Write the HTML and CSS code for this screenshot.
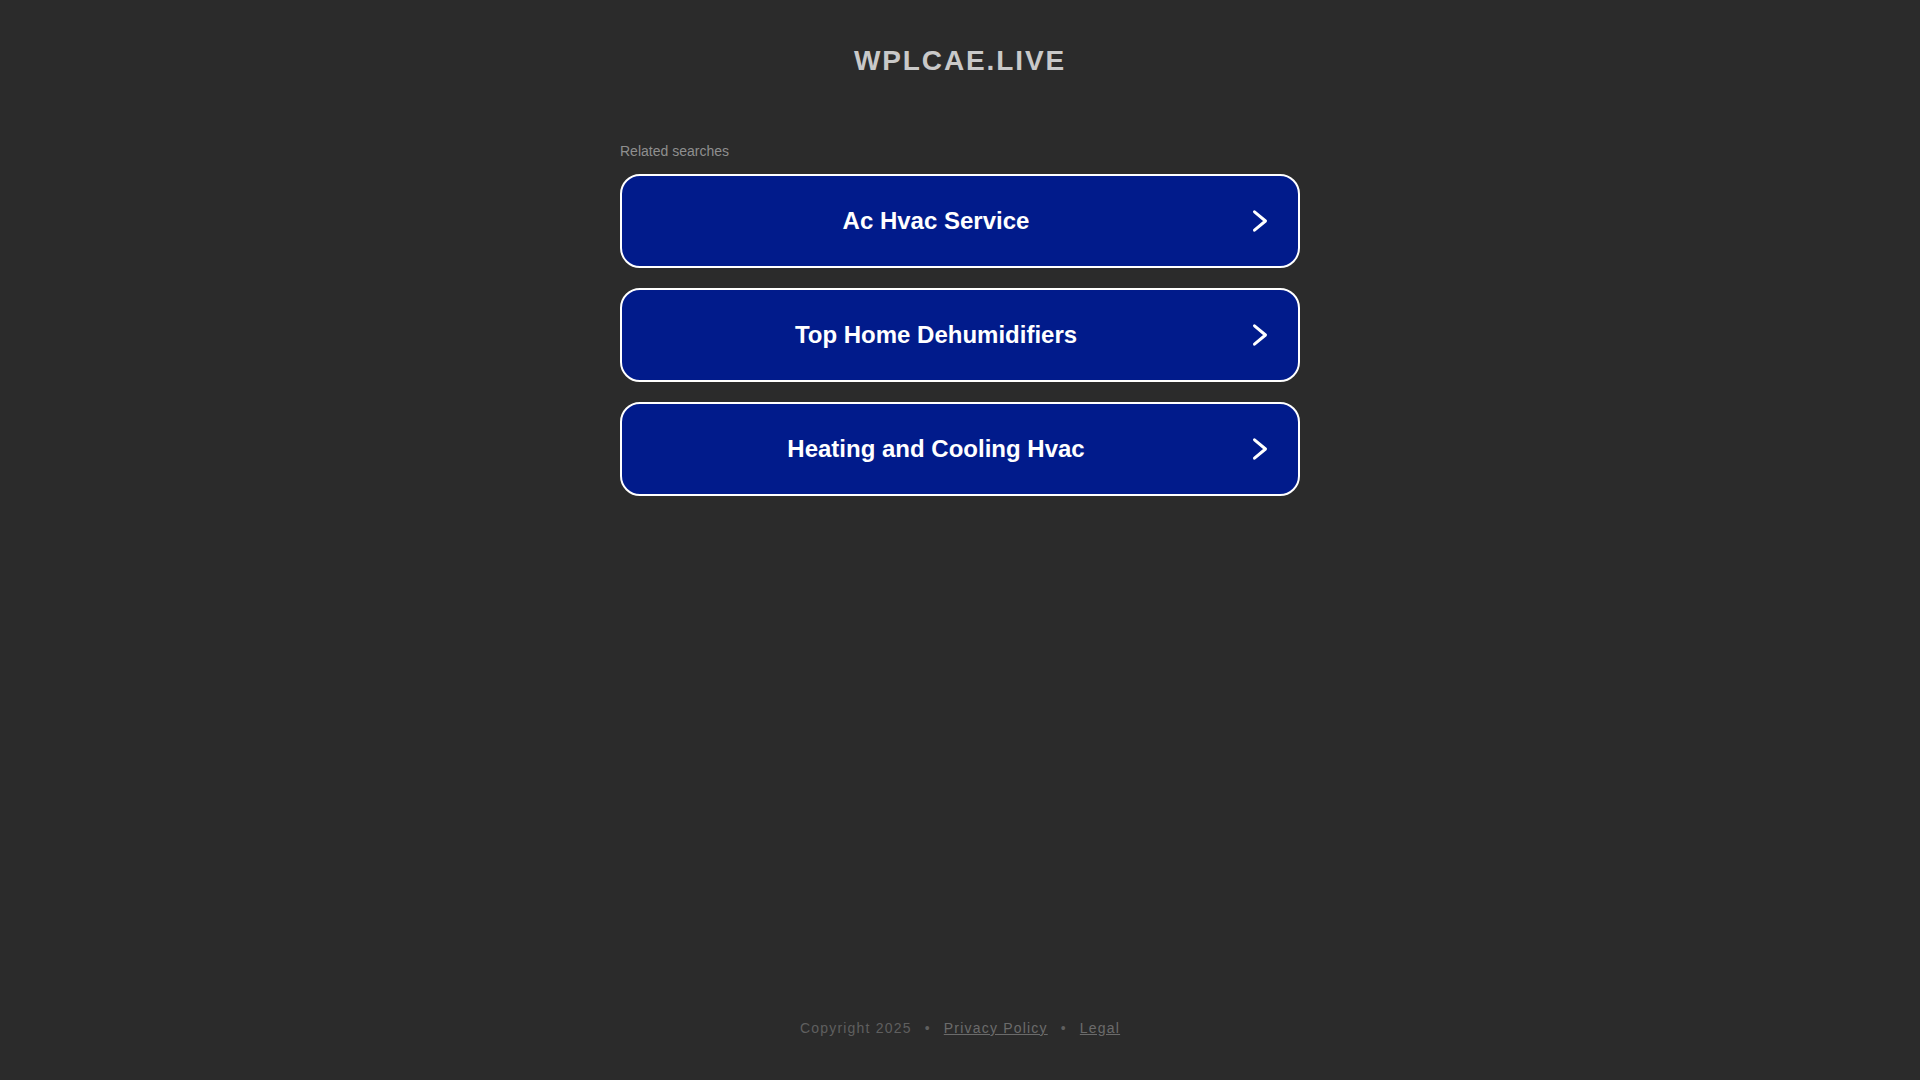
FILE: index.html
```
<!DOCTYPE html>
<html lang="en">
<head>
<meta charset="utf-8">
<title>wplcae.live</title>
<link rel="stylesheet" href="styles.css">
</head>
<body>
<div class="page">
  <header class="header">
    <h1 class="domain">WPLCAE.LIVE</h1>
  </header>
  <main class="content">
    <p class="related">Related searches</p>
    <div class="links">
      <a class="link" href="#">
        <span class="link-text">Ac Hvac Service</span>
        <svg class="chev" width="16" height="24" viewBox="0 0 16 24"><path d="M2.5 2.8 L13.5 12 L2.5 21.2" fill="none" stroke="#fff" stroke-width="3" stroke-linecap="round" stroke-linejoin="round"/></svg>
      </a>
      <a class="link" href="#">
        <span class="link-text">Top Home Dehumidifiers</span>
        <svg class="chev" width="16" height="24" viewBox="0 0 16 24"><path d="M2.5 2.8 L13.5 12 L2.5 21.2" fill="none" stroke="#fff" stroke-width="3" stroke-linecap="round" stroke-linejoin="round"/></svg>
      </a>
      <a class="link" href="#">
        <span class="link-text">Heating and Cooling Hvac</span>
        <svg class="chev" width="16" height="24" viewBox="0 0 16 24"><path d="M2.5 2.8 L13.5 12 L2.5 21.2" fill="none" stroke="#fff" stroke-width="3" stroke-linecap="round" stroke-linejoin="round"/></svg>
      </a>
    </div>
  </main>
  <footer class="footer">
    <span class="copy">Copyright 2025</span>
    <span class="sep">•</span>
    <a class="flink" href="#">Privacy Policy</a>
    <span class="sep">•</span>
    <a class="flink" href="#">Legal</a>
  </footer>
</div>
</body>
</html>
```
FILE: styles.css
```
html, body {
  margin: 0;
  padding: 0;
  background: #2b2b2b;
  font-family: "Liberation Sans", Arial, sans-serif;
}

.page {
  min-height: 100vh;
  display: flex;
  flex-direction: column;
}

.header {
  padding-top: 45px;
  display: flex;
  justify-content: center;
}

.domain {
  margin: 0;
  font-size: 28px;
  line-height: 32px;
  font-weight: 700;
  letter-spacing: 1.9px;
  color: #c9c9c9;
}

.content {
  width: 680px;
  margin: 0 auto;
  padding-top: 66px;
}

.related {
  margin: 0 0 15px 0;
  font-size: 14px;
  line-height: 16px;
  color: #8f8f8f;
}

.links {
  display: flex;
  flex-direction: column;
  gap: 20px;
}

.link {
  display: flex;
  align-items: center;
  height: 90px;
  border: 2px solid #ffffff;
  border-radius: 20px;
  background: #011b8b;
  color: #ffffff;
  text-decoration: none;
  padding-right: 30px;
}

.link-text {
  flex: 1;
  text-align: center;
  font-size: 24px;
  font-weight: 700;
  padding-right: 2px;
}

.chev {
  display: block;
}

.footer {
  margin-top: auto;
  padding-bottom: 44px;
  display: flex;
  justify-content: center;
  align-items: center;
  font-size: 14px;
  line-height: 16px;
  letter-spacing: 1.2px;
}

.copy {
  color: #5f5f5f;
}

.sep {
  color: #5f5f5f;
  margin: 0 13px;
}

.flink {
  color: #6b6b6b;
  text-decoration: underline;
}
```
